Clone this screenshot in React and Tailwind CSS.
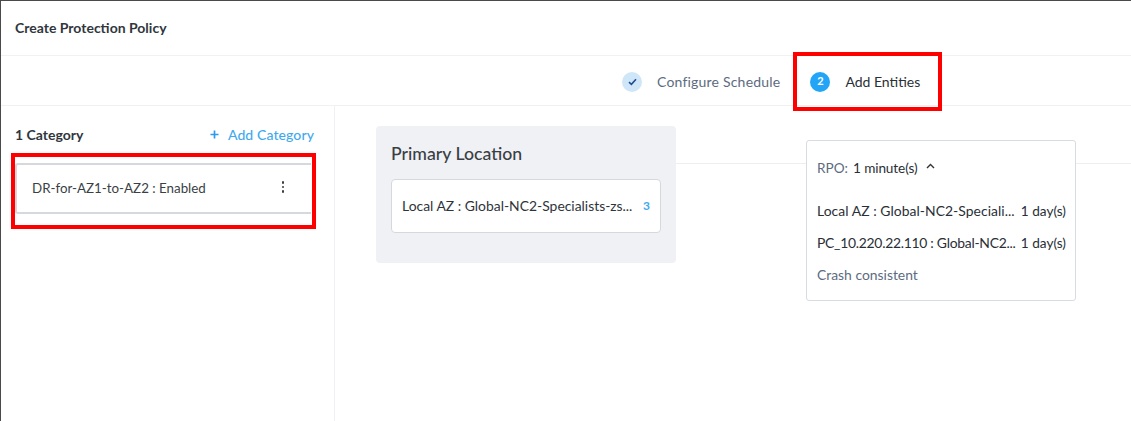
import React from "react";

export default function App() {
  return (
    <div className="relative w-[1131px] h-[421px] overflow-hidden bg-white border-t border-l border-[#4a4a4a] font-['Lato',sans-serif] text-[#22272e]">
      <header className="h-[55px] flex items-center pl-[14px] pb-px border-b border-[#f0f1f3] text-[14px] font-bold text-[#31363d]">
        Create Protection Policy
      </header>
      <div className="h-[50px] flex items-center border-b border-[#f0f1f3] pl-[621px] pt-[2px] text-[14px]">
        <span className="w-5 h-5 rounded-full bg-[#cfe6f9] flex items-center justify-center">
          <svg width="9" height="8" viewBox="0 0 9 8" fill="none" stroke="#1f4f91" strokeWidth="1.6"><path d="M1 4.2 L3.4 6.4 L8 1.2" /></svg>
        </span>
        <span className="ml-[15px] text-[#5c6b7f] tracking-[0.2px]">Configure Schedule</span>
        <span className="ml-[30px] w-5 h-5 rounded-full bg-[#22a5f7] text-white text-[11px] font-bold flex items-center justify-center">2</span>
        <span className="ml-[15px] text-[#2a2f36]">Add Entities</span>
      </div>
      <div className="flex h-[315px]">
        <aside className="w-[334px] shrink-0 border-r border-[#f0f1f3] pl-[14px] pr-[20px] pt-[19px]">
          <div className="flex items-center justify-between h-[18px]">
            <span className="text-[14px] font-bold text-[#31363d]">1 Category</span>
            <span className="flex items-center text-[14px] text-[#3fa9ee] font-medium tracking-[0.1px]">
              <svg width="9" height="9" viewBox="0 0 9 9" stroke="#2b9af0" strokeWidth="1.7" className="mr-[9px]"><path d="M4.5 0.5 V8.5 M0.5 4.5 H8.5" /></svg>
              Add Category
            </span>
          </div>
          <div className="mt-[20px] h-[51px] w-[296px] border-y-2 border-l-2 border-[#d5d9de] rounded-l-[3px] flex items-center justify-between pl-[15px] pr-[27px] text-[13.35px] text-[#3a3f46]">
            <span>DR-for-AZ1-to-AZ2 : Enabled</span>
            <span className="flex flex-col gap-[2px] mb-[3px]">
              <i className="block w-[2.5px] h-[2.5px] rounded-full bg-[#3a3f46]" />
              <i className="block w-[2.5px] h-[2.5px] rounded-full bg-[#3a3f46]" />
              <i className="block w-[2.5px] h-[2.5px] rounded-full bg-[#3a3f46]" />
            </span>
          </div>
        </aside>
        <main className="relative flex-1 flex items-start pl-[41px] pt-[20px]">
          <div className="absolute left-[300px] right-0 top-[57px] h-px bg-[#eceef0]" />
          <section className="relative w-[300px] h-[137px] rounded-[4px] bg-[#f0f1f4] px-[15px] pt-[17px]">
            <h2 className="text-[17.7px] leading-[22px] text-[#3a3f46] font-medium">Primary Location</h2>
            <div className="mt-[14px] h-[54px] w-[270px] bg-white rounded-[4px] border border-[#d5d9de] flex items-center justify-between pl-[10px] pr-[10px] text-[13.9px]">
              <span className="text-[#2f343b] whitespace-nowrap">Local AZ : Global-NC2-Specialists-zs...</span>
              <span className="text-[#3fa9ee] text-[12px] font-bold">3</span>
            </div>
          </section>
          <section className="relative ml-[130px] mt-[14px] w-[270px] h-[161px] bg-white rounded-[3px] border border-[#d8dbe0] pl-[10px] pr-[9px] pt-[18px] text-[13.9px] leading-[18px]">
            <div className="flex items-center text-[13.6px]">
              <span className="text-[#5c6b7f]">RPO:</span>
              <span className="ml-[5px] text-[#2a2f36] tracking-[-0.1px]">1 minute(s)</span>
              <svg width="9" height="6" viewBox="0 0 9 6" fill="none" stroke="#333" strokeWidth="1.4" className="ml-[9px] mb-[4px]"><path d="M1 5 L4.5 1.5 L8 5" /></svg>
            </div>
            <div className="mt-[25px] flex justify-between whitespace-nowrap text-[#2a2f36]">
              <span className="tracking-[0.05px]">Local AZ : Global-NC2-Speciali...</span><span className="text-[13.6px]">1 day(s)</span>
            </div>
            <div className="mt-[14px] flex justify-between whitespace-nowrap text-[#2a2f36]">
              <span className="tracking-[-0.27px]">PC_10.220.22.110 : Global-NC2...</span><span className="text-[13.6px]">1 day(s)</span>
            </div>
            <div className="mt-[14px] text-[#5c6b7f]">Crash consistent</div>
          </section>
        </main>
      </div>
      <div className="absolute left-[10px] top-[152px] w-[305px] h-[76px] border-[4px] border-[#ff0000]" />
      <div className="absolute left-[792px] top-[51px] w-[149px] h-[59px] border-[4px] border-[#ff0000]" />
    </div>
  );
}
